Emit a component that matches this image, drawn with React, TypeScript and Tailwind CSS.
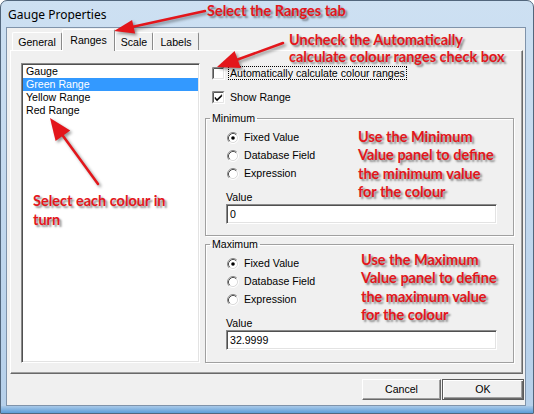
import React from 'react'

const ui = "font-['Liberation_Sans',Arial,sans-serif] text-[10.6px] leading-[13px] text-black"
const note =
  "font-['Lato','Open_Sans',sans-serif] font-bold text-[#e3161b] text-[14.5px] [text-shadow:2px_2px_2px_rgba(0,0,0,0.45)] whitespace-nowrap"

const CheckBox = ({ checked }: { checked?: boolean }) => (
  <svg width="13" height="13" viewBox="0 0 13 13" className="shrink-0">
    <rect x="0" y="0" width="13" height="13" fill="#ffffff" />
    <path d="M0.5 12.5 V0.5 H12.5" stroke="#8a8a8a" fill="none" />
    <path d="M1.5 11.5 V1.5 H11.5" stroke="#555" fill="none" />
    <path d="M12.5 0.5 V12.5 H0.5" stroke="#ffffff" fill="none" />
    <path d="M11.5 1.5 V11.5 H1.5" stroke="#e3e3e3" fill="none" />
    {checked && (
      <path d="M3 6 L5 8.3 L9.8 3.6 V5.4 L5 10.1 L3 7.8 Z" fill="#000" stroke="#000" strokeWidth="0.4" />
    )}
  </svg>
)

const Radio = ({ checked }: { checked?: boolean }) => (
  <svg width="12" height="12" viewBox="0 0 12 12" className="shrink-0">
    <circle cx="6" cy="6" r="4.5" fill="#ffffff" />
    <path d="M2.11 9.89 A5.5 5.5 0 0 1 9.89 2.11" stroke="#8a8a8a" fill="none" />
    <path d="M9.89 2.11 A5.5 5.5 0 0 1 2.11 9.89" stroke="#ffffff" fill="none" />
    <path d="M2.82 9.18 A4.5 4.5 0 0 1 9.18 2.82" stroke="#505050" fill="none" />
    <path d="M9.18 2.82 A4.5 4.5 0 0 1 2.82 9.18" stroke="#dcdcdc" fill="none" />
    {checked && <circle cx="6" cy="6" r="1.8" fill="#000" />}
  </svg>
)

const sunken =
  'bg-white border border-t-[#8a8a8a] border-l-[#8a8a8a] border-b-white border-r-white shadow-[inset_1px_1px_0_#505050,inset_-1px_-1px_0_#e3e3e3]'

const RadioRow = ({ label, checked }: { label: string; checked?: boolean }) => (
  <div className="flex items-center h-[13px] gap-[5px] pl-[1px]">
    <Radio checked={checked} />
    <span>{label}</span>
  </div>
)

const GroupBox = ({ title, value, h }: { title: string; value: string; h: string }) => (
  <fieldset
    className={`border border-[#a0a0a0] shadow-[inset_1px_1px_0_#ffffff,1px_1px_0_#ffffff] w-[309px] ${h}`}
  >
    <legend className="ml-[4px] px-[2px]">{title}</legend>
    <div className="flex flex-col pl-[20px] pt-[6px]">
      <div className="flex flex-col gap-[5px]">
        <RadioRow label="Fixed Value" checked />
        <RadioRow label="Database Field" />
        <RadioRow label="Expression" />
      </div>
      <div className="mt-[11px] h-[13px]">Value</div>
      <div className={`${sunken} w-[271px] h-[20px] flex items-center pl-[3px]`}>{value}</div>
    </div>
  </fieldset>
)

const Tab = ({ label, w, active }: { label: string; w: string; active?: boolean }) => (
  <div
    className={`${w} flex justify-center border-t border-l border-t-white border-l-white border-r border-r-[#8a8a8a] rounded-t-[2px] bg-[#f0f0f0] ${
      active ? 'h-[22px] -mb-px relative z-10 pt-[4px]' : 'h-[18px] pt-[3px]'
    }`}
  >
    {label}
  </div>
)

const Button = ({ label, w, primary }: { label: string; w: string; primary?: boolean }) => (
  <div
    className={`${w} h-[21px] flex items-center justify-center bg-[#f0f0f0] border ${
      primary
        ? 'border-[#5a5a5a] shadow-[inset_1px_1px_0_#ffffff,inset_-1px_-1px_0_#696969,inset_-2px_-2px_0_#a0a0a0]'
        : 'border-t-white border-l-white border-b-[#696969] border-r-[#696969] shadow-[inset_-1px_-1px_0_#a0a0a0]'
    }`}
  >
    {label}
  </div>
)

const Arrows = () => (
  <svg
    width="534"
    height="414"
    viewBox="0 0 534 414"
    className="absolute left-0 top-0 pointer-events-none [filter:drop-shadow(2px_2px_1.5px_rgba(0,0,0,0.4))]"
  >
    <g stroke="#e3161b" strokeWidth="2.5" strokeLinecap="round">
      <line x1="205" y1="11" x2="133" y2="26.7" />
      <line x1="283" y1="43" x2="237.7" y2="59.5" />
      <line x1="98" y1="184" x2="62.9" y2="135.8" />
    </g>
    <g fill="#e3161b">
      <polygon points="114,31 135.1,33.5 132.1,19.9" />
      <polygon points="217,67 240.8,68 234.6,51" />
      <polygon points="50,118 70.2,130.5 55.6,141.1" />
    </g>
  </svg>
)

export default function App() {
  return (
    <div className={`relative w-[534px] h-[414px] ${ui}`}>
      <div className="w-full h-full flex flex-col rounded-t-[7px] border border-[#52667c] bg-gradient-to-b from-[#cde0f2] to-[#b6d0ea] overflow-hidden">
        <div className="h-[26px] pl-[7px] flex items-center font-['Noto_Sans',sans-serif] text-[12px] text-black">
          Gauge Properties
        </div>
        <div className="flex-1 flex pl-[5px] pr-[7px]">
          <div className="flex-1 flex flex-col border border-[#7f93aa] bg-[#f0f0f0]">
            {/* tabs */}
            <div className="flex items-end h-[22px] pl-[5px]">
              <Tab label="General" w="w-[50px]" />
              <Tab label="Ranges" w="w-[53px]" active />
              <Tab label="Scale" w="w-[38px]" />
              <Tab label="Labels" w="w-[46px]" />
            </div>
            {/* tab page */}
            <div className="ml-[3px] mr-[2px] h-[324px] flex border border-t-white border-l-white border-r-[#696969] border-b-[#696969] shadow-[inset_-1px_-1px_0_#a0a0a0] pl-[10px] pt-[12px]">
              <div className={`${sunken} w-[179px] h-[300px] flex flex-col pt-[1px] px-[1px]`}>
                <div className="h-[13px] pl-[3px]">Gauge</div>
                <div className="h-[13px] pl-[3px] bg-[#3399ff] text-white">Green Range</div>
                <div className="h-[13px] pl-[3px]">Yellow Range</div>
                <div className="h-[13px] pl-[3px]">Red Range</div>
              </div>
              <div className="ml-[5px] flex flex-col pt-[3px]">
                <div className="flex items-center h-[14px] pl-[7px] gap-[3px]">
                  <CheckBox />
                  <span className="border border-dotted border-black px-[1px] leading-[12px]">
                    Automatically calculate colour ranges
                  </span>
                </div>
                <div className="flex items-center h-[14px] pl-[7px] gap-[5px] mt-[10px]">
                  <CheckBox checked />
                  <span>Show Range</span>
                </div>
                <div className="mt-[8px]">
                  <GroupBox title="Minimum" value="0" h="h-[124px]" />
                </div>
                <div className="mt-[2px]">
                  <GroupBox title="Maximum" value="32.9999" h="h-[125px]" />
                </div>
              </div>
            </div>
            {/* buttons */}
            <div className="flex justify-end mt-[5px] mr-[1px] gap-[1px]">
              <Button label="Cancel" w="w-[79px]" />
              <Button label="OK" w="w-[82px]" primary />
            </div>
          </div>
        </div>
        <div className="h-[7px] bg-gradient-to-b from-[#a9c9e8] to-[#5b9dd8]" />
      </div>

      {/* annotations */}
      <Arrows />
      <div className={`absolute left-[207px] top-[2px] leading-[18px] ${note}`}>Select the Ranges tab</div>
      <div className={`absolute left-[289px] top-[31px] leading-[17px] ${note}`}>
        Uncheck the Automatically
        <br />
        calculate colour ranges check box
      </div>
      <div className={`absolute left-[358px] top-[128px] leading-[18.3px] ${note}`}>
        Use the Minimum
        <br />
        Value panel to define
        <br />
        the minimum value
        <br />
        for the colour
      </div>
      <div className={`absolute left-[361px] top-[251px] leading-[18.3px] ${note}`}>
        Use the Maximum
        <br />
        Value panel to define
        <br />
        the maximum value
        <br />
        for the colour
      </div>
      <div className={`absolute left-[33px] top-[191px] leading-[19px] ${note}`}>
        Select each colour in
        <br />
        turn
      </div>
    </div>
  )
}
